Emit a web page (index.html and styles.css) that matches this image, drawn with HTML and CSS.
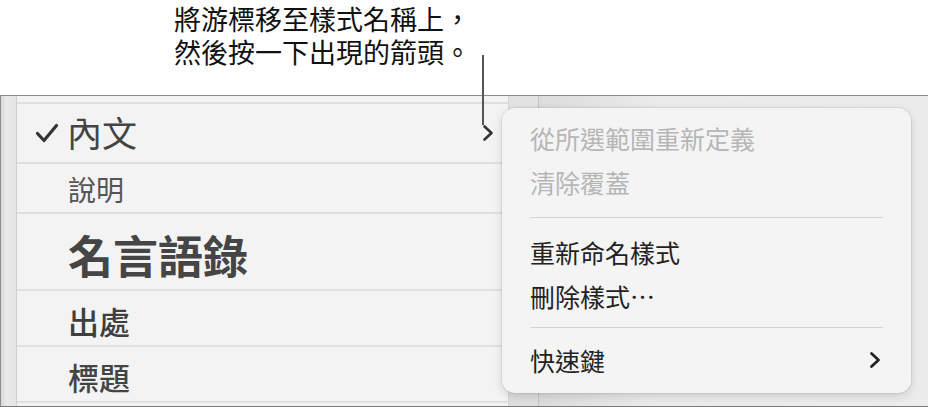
FILE: index.html
```html
<!DOCTYPE html>
<html lang="zh-Hant">
<head>
<meta charset="utf-8">
<link rel="stylesheet" href="styles.css">
</head>
<body>
<div class="page">
  <div class="callout">
    <div class="callout-line">將游標移至樣式名稱上，</div>
    <div class="callout-line">然後按一下出現的箭頭。</div>
  </div>
  <div class="window">
    <div class="sidebar"></div>
    <div class="list">
      <div class="row row-top"></div>
      <div class="row row-body">
        <svg class="check" width="24" height="20" viewBox="0 0 24 20"><path d="M2.5 10.5 L9 17.5 L21.5 2.5" fill="none" stroke="#333" stroke-width="3.2" stroke-linecap="round" stroke-linejoin="round"/></svg>
        <span class="t-body">內文</span>
        <svg class="chev" width="12" height="18" viewBox="0 0 12 18"><path d="M2.5 2.5 L9.5 9 L2.5 15.5" fill="none" stroke="#333" stroke-width="2.6" stroke-linecap="round" stroke-linejoin="round"/></svg>
      </div>
      <div class="row row-caption"><span class="t-caption">說明</span></div>
      <div class="row row-quote"><span class="t-quote">名言語錄</span></div>
      <div class="row row-src"><span class="t-src">出處</span></div>
      <div class="row row-title"><span class="t-title">標題</span></div>
    </div>
    <div class="gutter"></div>
    <div class="rest"></div>
  </div>
  <div class="pointer"></div>
  <div class="menu">
    <div class="item disabled">從所選範圍重新定義</div>
    <div class="item disabled">清除覆蓋</div>
    <div class="sep"></div>
    <div class="item">重新命名樣式</div>
    <div class="item">刪除樣式⋯</div>
    <div class="sep sep2"></div>
    <div class="item has-sub"><span>快速鍵</span>
      <svg class="chev-sub" width="12" height="18" viewBox="0 0 12 18"><path d="M2.5 2.5 L9.5 9 L2.5 15.5" fill="none" stroke="#222" stroke-width="2.8" stroke-linecap="round" stroke-linejoin="round"/></svg>
    </div>
  </div>
</div>
</body>
</html>
```
FILE: styles.css
```css
* { box-sizing: border-box; }
html, body {
  margin: 0;
  padding: 0;
  background: #fff;
}
body {
  width: 928px;
  height: 407px;
  overflow: hidden;
  font-family: "Noto Sans CJK TC", "Noto Sans", sans-serif;
}
.page {
  position: relative;
  width: 928px;
  height: 407px;
}
.callout {
  height: 95px;
  padding-left: 174px;
  padding-top: 2px;
  display: flex;
  flex-direction: column;
}
.callout-line {
  height: 33px;
  display: flex;
  align-items: center;
  font-size: 27px;
  line-height: 33px;
  color: #111;
  overflow: visible;
}
.window {
  display: flex;
  height: 312px;
  border-top: 1px solid #8c8c8c;
  border-bottom: 1px solid #7a7a7a;
  border-left: 1px solid #8c8c8c;
}
.sidebar {
  width: 16px;
  background: linear-gradient(to right, #d9d9d9, #e9e9e9 40%, #e4e4e4);
  border-right: 1px solid #cfcfcf;
}
.list {
  width: 491px;
  background: #f3f3f3;
  display: flex;
  flex-direction: column;
}
.row {
  display: flex;
  align-items: center;
  border-bottom: 2px solid #e0e0e0;
  padding-left: 51px;
  color: #444;
}
.row-top { height: 8px; }
.row-body {
  height: 60px;
  padding-left: 18px;
  padding-bottom: 3px;
}
.check { margin-right: 8px; margin-top: 3px; }
.t-body {
  font-size: 35px;
  line-height: 1;
  color: #444;
  flex: 1;
}
.chev { margin-right: 14px; margin-top: 3px; }
.row-caption { height: 50px; padding-top: 2px; }
.t-caption { font-size: 28px; color: #555; line-height: 1; }
.row-quote { height: 77px; padding-top: 6px; }
.t-quote { font-size: 45px; font-weight: 700; color: #454545; line-height: 1; }
.row-src { height: 56px; padding-top: 4px; }
.t-src { font-size: 31px; font-weight: 500; color: #3f3f3f; line-height: 1; }
.row-title { height: 56px; padding-top: 4px; }
.t-title { font-size: 31px; font-weight: 500; color: #444; line-height: 1; }
.gutter {
  width: 31px;
  background: linear-gradient(to bottom, #e2e2e2, #dedede);
  border-left: 1px solid #d6d6d6;
  border-right: 1px solid #c4c4c4;
}
.rest {
  flex: 1;
  background: linear-gradient(to right, #dcdcdc, #ebebeb 30%, #ececec);
}
.pointer {
  position: absolute;
  left: 482px;
  top: 55px;
  width: 2px;
  height: 70px;
  background: #555;
}
.menu {
  position: absolute;
  left: 502px;
  top: 108px;
  width: 409px;
  height: 285px;
  border-radius: 13px;
  background: #f4f4f4;
  box-shadow: 0 0 0 1px rgba(0,0,0,0.06), 0 3px 10px rgba(0,0,0,0.14);
  padding: 8px 28px 10px 28px;
}
.item {
  height: 44px;
  display: flex;
  align-items: center;
  font-size: 25px;
  color: #222;
}
.item.disabled { color: #b6b6b6; }
.has-sub { justify-content: space-between; }
.chev-sub { margin-right: 2px; }
.sep {
  height: 1px;
  background: #d4d4d4;
  margin: 13px 0 12px;
}
.sep2 { margin: 9px 0 10px; }
```
